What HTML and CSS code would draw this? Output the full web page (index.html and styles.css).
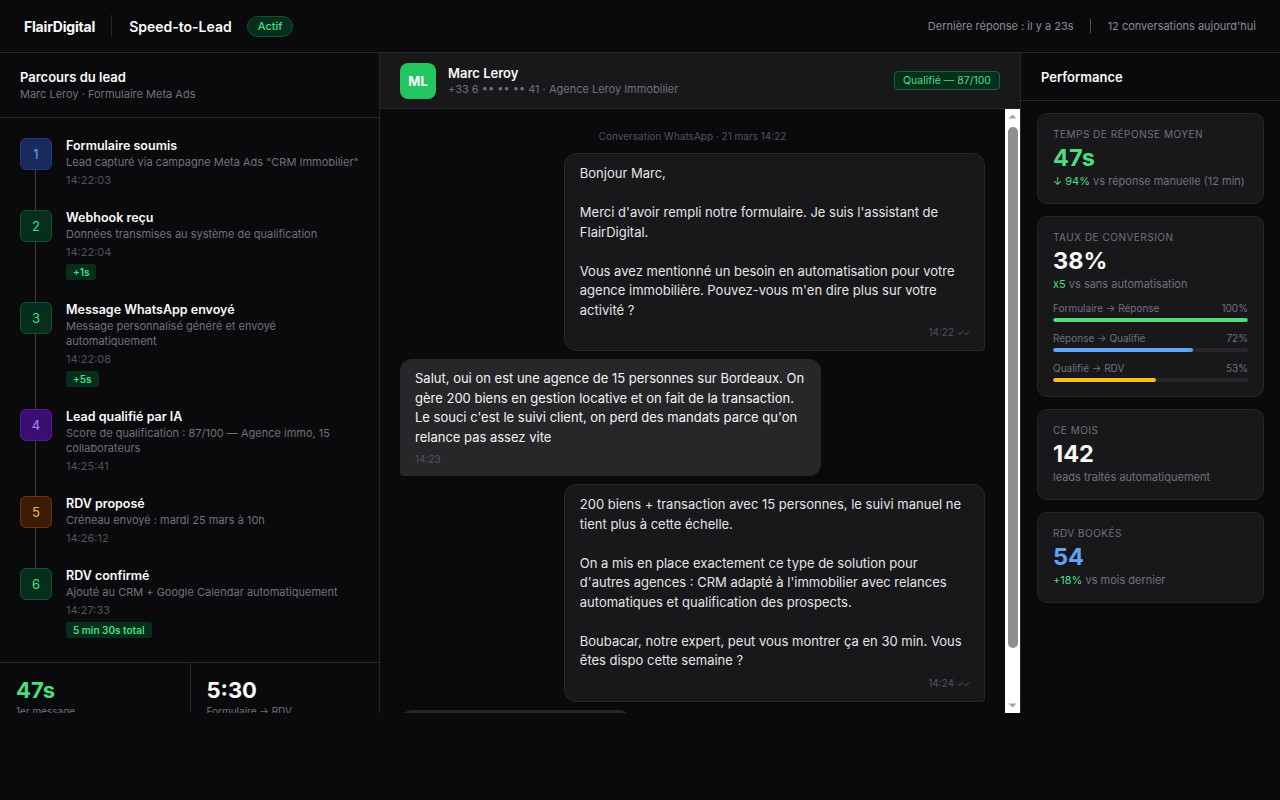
FILE: index.html
```html
<!DOCTYPE html>
<html lang="fr">
<head>
<meta charset="utf-8">
<title>FlairDigital — Speed-to-Lead</title>
<link rel="stylesheet" href="styles.css">
</head>
<body>
<div class="app">
  <header class="topbar">
    <div class="brand">
      <span class="logo">FlairDigital</span>
      <span class="vsep"></span>
      <span class="product">Speed-to-Lead</span>
      <span class="pill">Actif</span>
    </div>
    <div class="status">
      <span>Dernière réponse : il y a 23s</span>
      <span class="vsep small"></span>
      <span>12 conversations aujourd'hui</span>
    </div>
  </header>

  <main class="main">
    <aside class="journey">
      <div class="panel-head">
        <div class="panel-title">Parcours du lead</div>
        <div class="panel-sub">Marc Leroy · Formulaire Meta Ads</div>
      </div>
      <div class="timeline">
        <div class="step">
          <div class="num num-blue">1</div>
          <div class="step-body">
            <div class="step-title">Formulaire soumis</div>
            <div class="step-desc">Lead capturé via campagne Meta Ads "CRM Immobilier"</div>
            <div class="step-time">14:22:03</div>
          </div>
        </div>
        <div class="step">
          <div class="num num-green">2</div>
          <div class="step-body">
            <div class="step-title">Webhook reçu</div>
            <div class="step-desc">Données transmises au système de qualification</div>
            <div class="step-time">14:22:04</div>
            <span class="delta">+1s</span>
          </div>
        </div>
        <div class="step">
          <div class="num num-green">3</div>
          <div class="step-body">
            <div class="step-title">Message WhatsApp envoyé</div>
            <div class="step-desc">Message personnalisé généré et envoyé<br>automatiquement</div>
            <div class="step-time">14:22:08</div>
            <span class="delta">+5s</span>
          </div>
        </div>
        <div class="step">
          <div class="num num-purple">4</div>
          <div class="step-body">
            <div class="step-title">Lead qualifié par IA</div>
            <div class="step-desc">Score de qualification : 87/100 — Agence immo, 15<br>collaborateurs</div>
            <div class="step-time">14:25:41</div>
          </div>
        </div>
        <div class="step">
          <div class="num num-orange">5</div>
          <div class="step-body">
            <div class="step-title">RDV proposé</div>
            <div class="step-desc">Créneau envoyé : mardi 25 mars à 10h</div>
            <div class="step-time">14:26:12</div>
          </div>
        </div>
        <div class="step last">
          <div class="num num-green">6</div>
          <div class="step-body">
            <div class="step-title">RDV confirmé</div>
            <div class="step-desc">Ajouté au CRM + Google Calendar automatiquement</div>
            <div class="step-time">14:27:33</div>
            <span class="delta">5 min 30s total</span>
          </div>
        </div>
      </div>
      <div class="totals">
        <div class="total">
          <div class="total-val green">47s</div>
          <div class="total-lbl">1er message</div>
        </div>
        <div class="total">
          <div class="total-val">5:30</div>
          <div class="total-lbl">Formulaire → RDV</div>
        </div>
      </div>
    </aside>

    <section class="chat">
      <div class="chat-head">
        <div class="avatar">ML</div>
        <div class="contact">
          <div class="contact-name">Marc Leroy</div>
          <div class="contact-sub">+33 6 •• •• •• 41 · Agence Leroy Immobilier</div>
        </div>
        <span class="score">Qualifié — 87/100</span>
      </div>
      <div class="chat-body">
        <div class="messages">
          <div class="day">Conversation WhatsApp · 21 mars 14:22</div>
          <div class="msg out">
            <p>Bonjour Marc,</p>
            <p>Merci d'avoir rempli notre formulaire. Je suis l'assistant de FlairDigital.</p>
            <p>Vous avez mentionné un besoin en automatisation pour votre agence immobilière. Pouvez-vous m'en dire plus sur votre activité ?</p>
            <div class="meta">14:22 <span class="ticks">✓✓</span></div>
          </div>
          <div class="msg in">
            <p>Salut, oui on est une agence de 15 personnes sur Bordeaux. On gère 200 biens en gestion locative et on fait de la transaction. Le souci c'est le suivi client, on perd des mandats parce qu'on relance pas assez vite</p>
            <div class="meta">14:23</div>
          </div>
          <div class="msg out">
            <p>200 biens + transaction avec 15 personnes, le suivi manuel ne tient plus à cette échelle.</p>
            <p>On a mis en place exactement ce type de solution pour d'autres agences : CRM adapté à l'immobilier avec relances automatiques et qualification des prospects.</p>
            <p>Boubacar, notre expert, peut vous montrer ça en 30 min. Vous êtes dispo cette semaine ?</p>
            <div class="meta">14:24 <span class="ticks">✓✓</span></div>
          </div>
          <div class="msg in">
            <p>Oui, mardi à 10h ça me va parfait</p>
            <div class="meta">14:26</div>
          </div>
        </div>
        <div class="vscroll" aria-hidden="true">
          <svg class="arrow" width="15" height="15" viewBox="0 0 15 15"><path d="M3.5 9.5 L7.5 5.5 L11.5 9.5 Z" fill="#a3a3a3"/></svg>
          <div class="rail"><div class="thumb"></div></div>
          <svg class="arrow" width="15" height="15" viewBox="0 0 15 15"><path d="M3.5 5.5 L7.5 9.5 L11.5 5.5 Z" fill="#a3a3a3"/></svg>
        </div>
      </div>
    </section>

    <aside class="perf">
      <div class="perf-head">Performance</div>
      <div class="cards">
        <div class="card">
          <div class="card-lbl">Temps de réponse moyen</div>
          <div class="card-val green">47s</div>
          <div class="card-sub"><span class="green">↓ 94%</span> vs réponse manuelle (12 min)</div>
        </div>
        <div class="card">
          <div class="card-lbl">Taux de conversion</div>
          <div class="card-val">38%</div>
          <div class="card-sub"><span class="green">x5</span> vs sans automatisation</div>
          <div class="funnel">
            <div class="frow">
              <div class="frow-top"><span>Formulaire → Réponse</span><span>100%</span></div>
              <div class="track"><div class="fill f-green" style="width:100%"></div></div>
            </div>
            <div class="frow">
              <div class="frow-top"><span>Réponse → Qualifié</span><span>72%</span></div>
              <div class="track"><div class="fill f-blue" style="width:72%"></div></div>
            </div>
            <div class="frow">
              <div class="frow-top"><span>Qualifié → RDV</span><span>53%</span></div>
              <div class="track"><div class="fill f-yellow" style="width:53%"></div></div>
            </div>
          </div>
        </div>
        <div class="card">
          <div class="card-lbl">Ce mois</div>
          <div class="card-val">142</div>
          <div class="card-sub">leads traités automatiquement</div>
        </div>
        <div class="card">
          <div class="card-lbl">RDV bookés</div>
          <div class="card-val blue">54</div>
          <div class="card-sub"><span class="green">+18%</span> vs mois dernier</div>
        </div>
      </div>
    </aside>
  </main>
</div>
</body>
</html>
```

FILE: styles.css
```css
* { box-sizing: border-box; margin: 0; padding: 0; }

html, body {
  background: #0a0a0c;
  color: #f4f4f5;
  font-family: Inter, "Noto Sans", "Liberation Sans", sans-serif;
  height: 100%;
}

.app {
  display: flex;
  flex-direction: column;
}

/* Top bar */
.topbar {
  height: 53px;
  display: flex;
  align-items: center;
  justify-content: space-between;
  padding: 0 24px;
  border-bottom: 1px solid #27272a;
  background: #0a0a0c;
}
.brand { display: flex; align-items: center; }
.logo { font-size: 14px; font-weight: 700; color: #fafafa; letter-spacing: -0.2px; }
.vsep { width: 1px; height: 22px; background: #27272a; margin: 0 17px 0 16px; }
.vsep.small { height: 14px; background: #52525b; margin: 0 17px 0 16px; }
.product { font-size: 14px; font-weight: 600; color: #fafafa; }
.pill {
  margin-left: 15px;
  font-size: 11px;
  font-weight: 500;
  color: #4ade80;
  background: #052e1c;
  border: 1px solid #14532d;
  border-radius: 999px;
  padding: 2px 10px;
  line-height: 15px;
}
.status { display: flex; align-items: center; font-size: 11px; color: #8b8b94; }

/* Main */
.main {
  height: 660px;
  display: grid;
  grid-template-columns: 380px 1fr 260px;
  overflow: hidden;
}

/* Left journey */
.journey {
  border-right: 1px solid #27272a;
  overflow: hidden;
  display: flex;
  flex-direction: column;
}
.panel-head {
  padding: 16px 20px 15px;
  border-bottom: 1px solid #27272a;
}
.panel-title { font-size: 13px; font-weight: 600; line-height: 16px; color: #fafafa; }
.panel-sub { font-size: 11px; line-height: 16px; margin-top: 1px; color: #71717a; }

.timeline { padding: 20px 20px 2px; }
.step {
  display: flex;
  gap: 14px;
  padding-bottom: 22px;
  position: relative;
}
.step::before {
  content: "";
  position: absolute;
  left: 15px;
  top: 32px;
  bottom: 0;
  width: 1px;
  background: #3f3f46;
}
.step.last::before { display: none; }
.num {
  width: 32px;
  height: 32px;
  flex: none;
  border-radius: 6px;
  display: flex;
  align-items: center;
  justify-content: center;
  font-size: 13px;
  border: 1px solid;
}
.num-blue { background: #1a2a5e; border-color: #24397a; color: #60a5fa; }
.num-green { background: #062e1c; border-color: #14532d; color: #4ade80; }
.num-purple { background: #3b0f72; border-color: #4c1d95; color: #a78bfa; }
.num-orange { background: #3a1d06; border-color: #7c2d12; color: #fbbf24; }

.step-body { display: flex; flex-direction: column; align-items: flex-start; }
.step-title { font-size: 12.5px; font-weight: 600; line-height: 16px; color: #fafafa; }
.step-desc { font-size: 11px; line-height: 15px; margin-top: 1px; color: #71717a; }
.step-time { font-size: 11px; line-height: 15px; margin-top: 3px; color: #52525b; }
.delta {
  margin-top: 4px;
  font-size: 10px;
  font-weight: 600;
  line-height: 16px;
  padding: 0 7px;
  border-radius: 3px;
  background: #052e1c;
  color: #4ade80;
}

.totals {
  display: grid;
  grid-template-columns: 1fr 1fr;
  border-top: 1px solid #27272a;
  flex: none;
}
.total { padding: 14px 16px; }
.total + .total { border-left: 1px solid #27272a; }
.total-val { font-size: 22px; font-weight: 700; line-height: 26px; color: #fafafa; }
.total-lbl { font-size: 10px; color: #71717a; margin-top: 2px; }

.green { color: #4ade80; }
.blue { color: #60a5fa; }

/* Chat */
.chat {
  display: flex;
  flex-direction: column;
  min-width: 0;
  min-height: 0;
  overflow: hidden;
}
.chat-head {
  height: 56px;
  flex: none;
  display: flex;
  align-items: center;
  padding: 0 20px;
  background: #18181b;
  border-bottom: 1px solid #27272a;
}
.avatar {
  width: 36px;
  height: 36px;
  border-radius: 8px;
  background: #22c55e;
  color: #fff;
  font-size: 13px;
  font-weight: 700;
  display: flex;
  align-items: center;
  justify-content: center;
}
.contact { margin-left: 12px; flex: 1; }
.contact-name { font-size: 13px; font-weight: 600; line-height: 17px; color: #fafafa; }
.contact-sub { font-size: 11px; line-height: 15px; color: #71717a; }
.score {
  font-size: 10.5px;
  line-height: 15px;
  color: #4ade80;
  background: #052e1c;
  border: 1px solid #166534;
  border-radius: 4px;
  padding: 1px 8px;
}

.chat-body {
  flex: 1;
  min-height: 0;
  display: flex;
}
.messages {
  flex: 1;
  min-width: 0;
  overflow: hidden;
  padding: 20px 20px 20px;
  display: flex;
  flex-direction: column;
  gap: 8px;
}
.vscroll {
  width: 15px;
  flex: none;
  background: #ffffff;
  display: flex;
  flex-direction: column;
}
.arrow { display: block; flex: none; }
.rail {
  flex: 1;
  padding: 3px 2px 50px 3px;
  display: flex;
}
.thumb {
  flex: 1;
  background: #8f8f8f;
  border-radius: 5px;
}
.day {
  text-align: center;
  font-size: 10px;
  line-height: 14px;
  color: #52525b;
  margin-bottom: 2px;
}
.msg {
  flex: none;
  max-width: 72%;
  font-size: 13px;
  line-height: 19.5px;
  padding: 10px 15px 10px;
  border-radius: 12px;
}
.msg p + p { margin-top: 19.5px; }
.msg.out {
  align-self: flex-end;
  background: #18181b;
  border: 1px solid #27272a;
  border-bottom-right-radius: 4px;
  color: #e4e4e7;
}
.msg.in {
  align-self: flex-start;
  background: #27272a;
  border-bottom-left-radius: 4px;
  color: #f4f4f5;
}
.meta {
  font-size: 10px;
  line-height: 14px;
  margin-top: 5px;
  color: #52525b;
}
.msg.out .meta { text-align: right; }
.ticks { font-size: 8px; letter-spacing: -1px; }

/* Performance */
.perf { border-left: 1px solid #27272a; overflow: hidden; }
.perf-head {
  height: 48px;
  display: flex;
  align-items: center;
  padding: 0 20px;
  border-bottom: 1px solid #27272a;
  font-size: 13px;
  font-weight: 600;
  color: #fafafa;
}
.cards {
  padding: 12px 16px;
  display: flex;
  flex-direction: column;
  gap: 12px;
}
.card {
  background: #18181b;
  border: 1px solid #27272a;
  border-radius: 10px;
  padding: 13px 15px 14px;
}
.card-lbl {
  font-size: 10px;
  line-height: 14px;
  text-transform: uppercase;
  letter-spacing: 0.5px;
  color: #71717a;
}
.card-val {
  font-size: 23.5px;
  font-weight: 700;
  line-height: 28px;
  margin-top: 3px;
  color: #fafafa;
}
.card-val.green { color: #4ade80; }
.card-val.blue { color: #60a5fa; }
.card-sub { font-size: 11px; line-height: 16px; color: #71717a; margin-top: 1px; }

.funnel { margin-top: 9px; display: flex; flex-direction: column; gap: 9px; }
.frow-top {
  display: flex;
  justify-content: space-between;
  font-size: 10px;
  line-height: 14px;
  color: #71717a;
}
.track {
  margin-top: 3px;
  height: 4px;
  border-radius: 2px;
  background: #27272a;
  overflow: hidden;
}
.fill { height: 100%; border-radius: 2px; }
.f-green { background: #4ade80; }
.f-blue { background: #60a5fa; }
.f-yellow { background: #fbbf24; }
```
